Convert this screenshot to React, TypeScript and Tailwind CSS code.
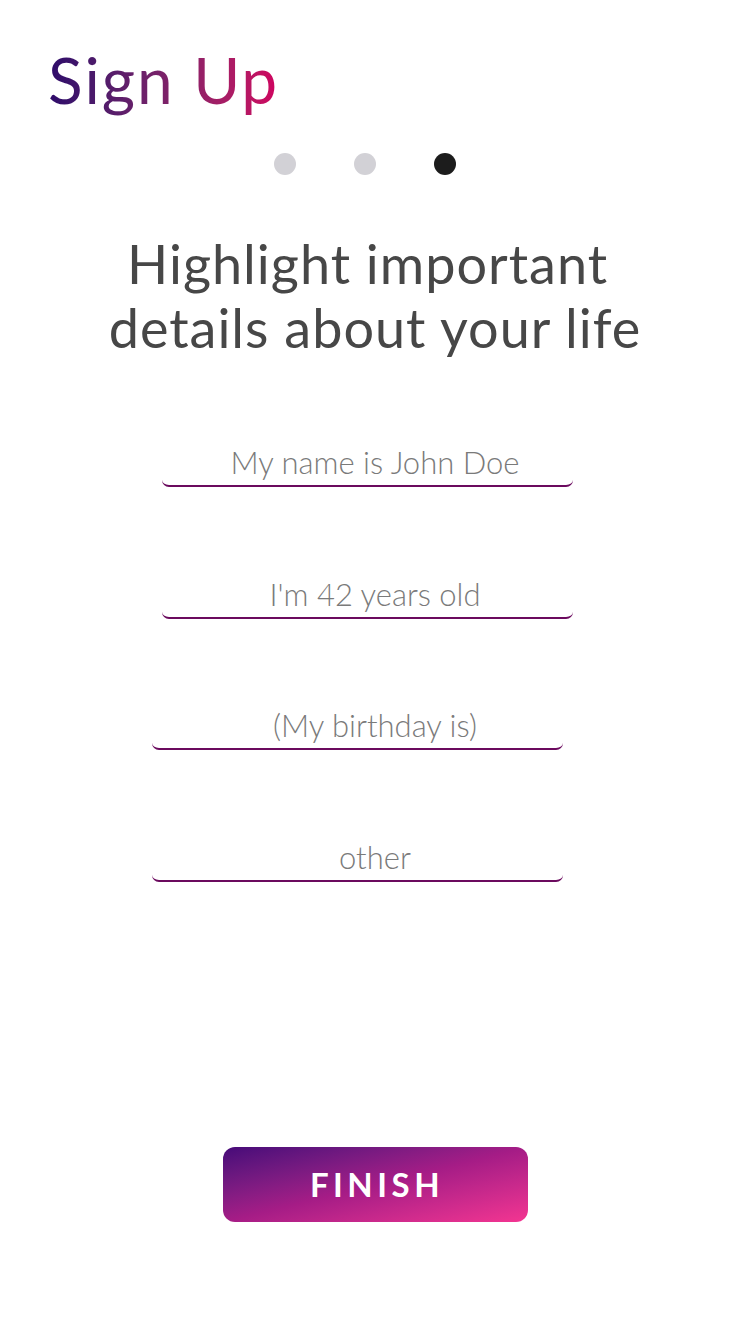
export default function App() {
  const fields = [
    { label: "My name is John Doe", offset: "ml-[162px]" },
    { label: "I'm 42 years old", offset: "ml-[162px]" },
    { label: "(My birthday is)", offset: "ml-[152px]" },
    { label: "other", offset: "ml-[152px]" },
  ];

  return (
    <div className="w-[750px] h-[1334px] bg-white font-['Lato','Liberation_Sans',sans-serif] flex flex-col">
      {/* Title */}
      <h1 className="pl-[48px] pt-[40px] text-[64px] leading-[80px] font-normal tracking-[2px]">
        <span className="bg-gradient-to-r from-[#2e0a6a] to-[#d0005f] bg-clip-text text-transparent">
          Sign Up
        </span>
      </h1>

      {/* Step dots */}
      <div className="mt-[33px] flex justify-center gap-[58px] pr-[20px]">
        <span className="w-[22px] h-[22px] rounded-full bg-[#d2d1d6]" />
        <span className="w-[22px] h-[22px] rounded-full bg-[#d2d1d6]" />
        <span className="w-[22px] h-[22px] rounded-full bg-[#1c1c1c]" />
      </div>

      {/* Heading */}
      <h2 className="mt-[57px] text-center text-[54px] leading-[64px] tracking-[1px] text-[#474747] font-normal">
        Highlight important{"\u00a0"}
        <br />
        details about your life
      </h2>

      {/* Fields */}
      <div className="mt-[84px] flex flex-col gap-[88.7px]">
        {fields.map((f) => (
          <div key={f.label} className="flex flex-col">
            <input
              placeholder={f.label}
              className="w-full bg-transparent text-center text-[31px] leading-[36px] font-light text-[#777] placeholder:text-[#7a7a7a] outline-none"
            />
            <div
              className={`${f.offset} w-[411px] h-[7px] border-b-[2.5px] border-[#6b0a5e] rounded-b-[12px]`}
            />
          </div>
        ))}
      </div>

      {/* Finish button */}
      <div className="mt-auto mb-[112px] flex justify-center">
        <button className="w-[305px] h-[75px] rounded-[12px] bg-gradient-to-br from-[#470979] via-[#a51c86] to-[#f43591] text-white text-[33px] font-bold tracking-[4.5px] pl-[4px]">
          FINISH
        </button>
      </div>
    </div>
  );
}
